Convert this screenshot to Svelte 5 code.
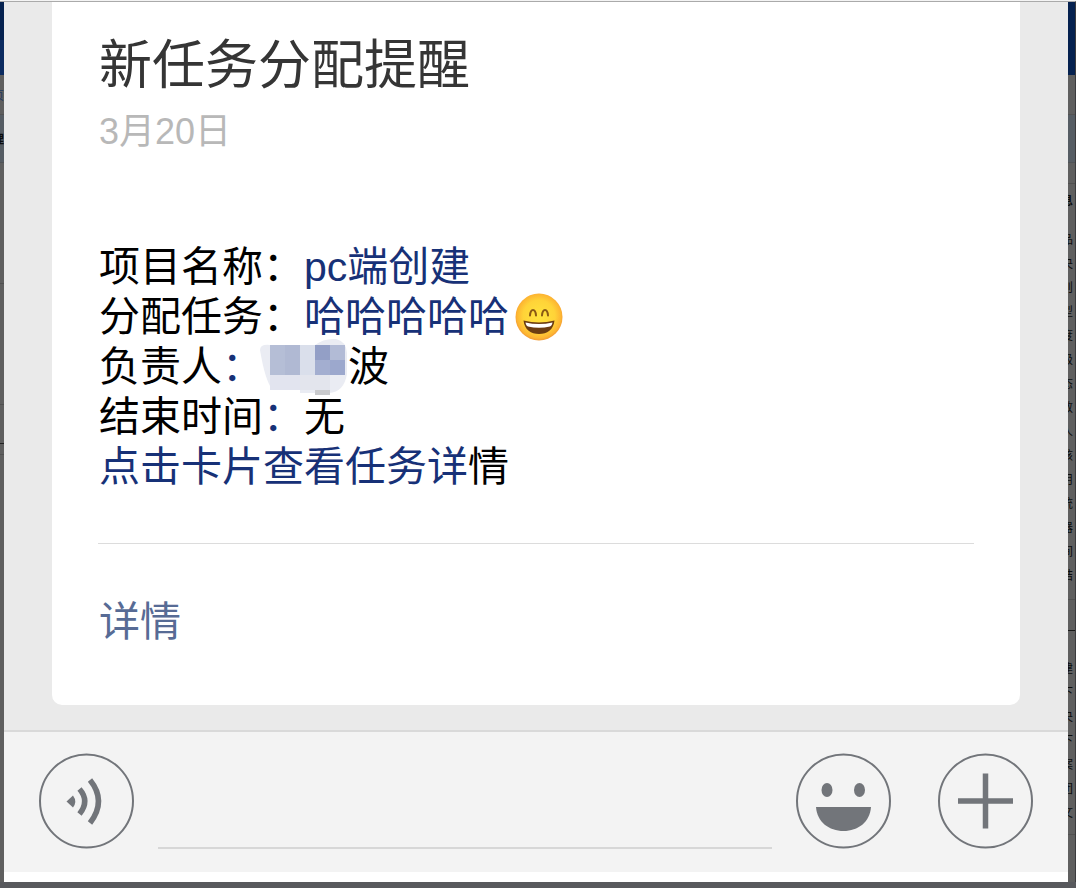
<script lang="ts">
  type Part = { text: string; link?: boolean };

  const title = "新任务分配提醒";
  const date = "3月20日";

  const details: { parts: Part[]; extra?: "emoji" | "masked"; tail?: string }[] = [
    { parts: [{ text: "项目名称：" }, { text: "pc端创建", link: true }] },
    { parts: [{ text: "分配任务：" }, { text: "哈哈哈哈哈", link: true }], extra: "emoji" },
    { parts: [{ text: "负责人" }, { text: "：", link: true }], extra: "masked", tail: "波" },
    { parts: [{ text: "结束时间" }, { text: "：", link: true }, { text: "无" }] },
    { parts: [{ text: "点击卡片查看任务详", link: true }, { text: "情" }] }
  ];

  // table rows of the dimmed page, cut off by the dialog
  const firstRows = [..."品央则型度级态数人核用统器间结"];
  const secondRows = [..."建下央下案团文"];

  let message = $state("");
</script>

<div class="page">
  <aside class="behind left">
    <div class="nav"></div>
    <div class="tabs"><span>页</span></div>
    <div class="band"><b>理</b></div>
    <div class="rest"></div>
    <div class="rest"></div>
    <div class="rest dark"></div>
    <div class="fill"></div>
  </aside>

  <main class="dialog">
    <section class="chat">
      <article class="card">
        <h1>{title}</h1>
        <time datetime="03-20">{date}</time>
        <div class="details">
          {#each details as row}
            <p>
              {#each row.parts as part}<span class:link={part.link}>{part.text}</span>{/each}
              {#if row.extra === "emoji"}
                <svg class="emoji" viewBox="0 0 48 48" role="img" aria-label="笑脸">
                  <defs>
                    <radialGradient id="face" cx="50%" cy="48%" r="52%">
                      <stop offset="0" stop-color="#ffe43e" />
                      <stop offset="0.65" stop-color="#ffd338" />
                      <stop offset="0.9" stop-color="#fdb532" />
                      <stop offset="1" stop-color="#f19a35" />
                    </radialGradient>
                  </defs>
                  <circle cx="24" cy="24" r="23.5" fill="url(#face)" />
                  <path d="M15 22.500c.5-7.500 5.500-7.500 6 0M27 22.500c.5-7.500 5.500-7.500 6 0" fill="none" stroke="#8a5a14" stroke-width="2" stroke-linecap="round" />
                  <path d="M8.500 27.500q15.500 4 31 0C38.500 37 32 41 24 41S9.500 37 8.500 27.500z" fill="#6b3c12" />
                  <path d="M10.500 29.500q13.500 3 27 0c-.4 2.500-1.300 3.500-2.500 4q-11 2.500-22 0c-1.200-.5-2.100-1.500-2.500-4z" fill="#fff" />
                </svg>
              {:else if row.extra === "masked"}
                <svg class="masked" viewBox="0 0 88 58" aria-hidden="true">
                  <path d="M0 12q0-6 10-5h45Q64 0 76 1q10 2 11 14v21q-3 18-18 19H40V51H12Q5 42 0 12z" fill="#eaecf3" />
                  <path d="M10 7h30v30H10z" fill="#b5bed6" />
                  <path d="M25 7h15v30H25z" fill="#b0b9d3" />
                  <path d="M40 7h15v30H40z" fill="#dadfeb" />
                  <path d="M55 7h15v15H55z" fill="#939fc6" />
                  <path d="M70 7h15v15H70z" fill="#b2bbd6" />
                  <path d="M55 22h15v15H55z" fill="#a3aed0" />
                  <path d="M70 22h15v15H70z" fill="#9ca8cd" />
                  <path d="M10 37h30v15H10z" fill="#e2e4ef" />
                  <path d="M40 37h30v15H40z" fill="#e3e5ed" />
                  <path d="M55 52h15v5H55z" fill="#c9cacd" />
                </svg>
              {/if}
              {#if row.tail}<span>{row.tail}</span>{/if}
            </p>
          {/each}
        </div>
        <footer><a href="#detail">详情</a></footer>
      </article>
    </section>

    <form class="toolbar" onsubmit={(e) => e.preventDefault()}>
      <button type="button" aria-label="语音">
        <svg viewBox="0 0 95 95">
          <circle cx="47.500" cy="47" r="46.500" />
          <path class="solid" d="M27.500 47.500L34 41.500q4.500 6 0 12z" />
          <path d="M40.500 35q10.500 12 0 25M51 26q17 21 0 43" stroke-width="5.500" />
        </svg>
      </button>
      <input type="text" aria-label="消息" autocomplete="off" bind:value={message} />
      <button type="button" aria-label="表情">
        <svg viewBox="0 0 95 95">
          <circle cx="47.500" cy="47" r="46.500" />
          <ellipse class="solid" cx="31" cy="36" rx="5.500" ry="7" />
          <ellipse class="solid" cx="63.500" cy="36" rx="5.500" ry="7" />
          <path class="solid" d="M20 53h55C74 68 62 77 47.500 77S21 68 20 53z" />
        </svg>
      </button>
      <button class="more" type="button" aria-label="更多">
        <svg viewBox="0 0 95 95">
          <circle cx="47.500" cy="47" r="46.500" />
          <path d="M20 47h55M47.500 19.500v55" stroke-width="5.500" />
        </svg>
      </button>
    </form>
  </main>

  <aside class="behind right">
    <div class="nav"></div>
    <div class="tabs"></div>
    <div class="band"></div>
    <div class="gap"></div>
    <div class="head"><b>息</b></div>
    <ul>
      {#each firstRows as row}<li>{row}</li>{/each}
    </ul>
    <div class="split"></div>
    <div class="split dark"></div>
    <ul>
      {#each secondRows as row}<li>{row}</li>{/each}
    </ul>
    <div class="fill"></div>
  </aside>
</div>

<style>
:global(body) {
  margin: 0;
  background: #58595d;
}
.page {
  display: grid;
  grid-template-columns: 4px minmax(0, 1fr) 8px;
  padding-bottom: 6px;
  border-top: 1px solid #f4f4f4;
  box-sizing: border-box;
  min-height: 100vh;
  font-family: "Liberation Sans", "Noto Sans CJK SC", sans-serif;
}

/* page behind */
.behind {
  display: flex;
  flex-direction: column;
  overflow: hidden;
  border-top: 1px solid #aaa;
  background: #5f5f5f;
  color: #0c0c0c;
  font-family: "Noto Sans CJK SC", sans-serif;
  font-size: 12px;
  line-height: 24px;
}
.behind.right {
  border-right: 1px solid #3c3c3e;
}
.behind div,
.behind li {
  display: flex;
  justify-content: flex-end;
  flex: none;
}
.behind.right li,
.behind.right .head {
  padding-right: 2px;
}
.nav {
  height: 73px;
  background: #05214f;
}
.left .nav {
  background: linear-gradient(#05214f 38px, #0c2c61 38px);
}
.tabs {
  height: 40px;
  padding-top: 8px;
  box-sizing: border-box;
  border-bottom: 1px solid #535353;
  color: #1f3a60;
}
.band {
  height: 48px;
  padding-top: 12px;
  box-sizing: border-box;
  background: #565d64;
  border-bottom: 1px solid #505357;
}
.gap {
  height: 20px;
  border-bottom: 1px solid #505050;
}
.head {
  padding-top: 4px;
  padding-bottom: 15px;
}
.rest {
  height: 120px;
  border-bottom: 1px solid #505050;
}
.rest.dark {
  height: 38px;
  border-color: #222;
}
ul {
  list-style: none;
  margin: 0;
  padding: 0;
}
.split {
  height: 12px;
  border-bottom: 1px solid #515151;
}
.split.dark {
  height: 30px;
  margin-bottom: 25px;
  border-color: #181818;
}
.behind .fill {
  flex: 1;
  margin-top: 10px;
  border-top: 1px solid #515151;
}

/* dialog */
.dialog {
  display: flex;
  flex-direction: column;
  min-width: 0;
  padding-bottom: 10px;
  border-top: 1px solid #aaa;
  background: #fff;
}
.chat {
  flex: 1;
  padding: 0 48px 25px;
  background: #eaeaea;
}
.card {
  padding: 32px 46px 58px;
  border-radius: 0 0 10px 10px;
  background: #fff;
}
h1 {
  margin: 0;
  color: #353535;
  font-size: 53px;
  font-weight: 400;
  line-height: 64px;
}
time {
  display: block;
  margin-top: 10px;
  color: #b8b8b8;
  font-size: 36px;
  line-height: 48px;
}
.details {
  padding: 86px 0 51px;
  border-bottom: 1px solid #dcdcdc;
  color: #000;
}
p {
  display: flex;
  align-items: center;
  height: 50px;
  margin: 0;
  font-size: 41px;
  line-height: 50px;
  white-space: nowrap;
}
h1,
time,
p,
footer {
  padding-left: 1px;
}
.link {
  color: #173177;
}
.emoji {
  width: 48px;
  height: 48px;
  margin-left: 6px;
}
.masked {
  width: 88px;
  height: 58px;
  margin-left: -3px;
}
footer {
  padding-top: 53px;
  font-size: 41px;
  line-height: 50px;
}
footer a {
  color: #576b95;
  text-decoration: none;
}

/* toolbar */
.toolbar {
  display: flex;
  align-items: flex-end;
  padding: 22px 35px 23px;
  border-top: 2px solid #d9d9d9;
  background: #f3f3f3;
}
.toolbar button {
  flex: none;
  width: 95px;
  height: 95px;
  padding: 0;
  border: 0;
  background: none;
  cursor: pointer;
}
.toolbar svg {
  display: block;
  overflow: visible;
  fill: none;
  stroke: #72757a;
  stroke-width: 2;
}
.toolbar .solid {
  fill: #72757a;
  stroke: none;
}
.toolbar input {
  flex: 1;
  min-width: 0;
  height: 72px;
  margin: 0 24px;
  padding: 0;
  border: 0;
  border-bottom: 2px solid #d7d7d7;
  outline: none;
  background: none;
  font: inherit;
  font-size: 41px;
}
.more {
  margin-left: 47px;
}
</style>
